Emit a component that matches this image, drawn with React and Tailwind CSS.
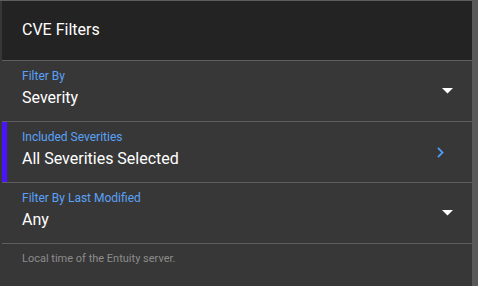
function DropArrow() {
  return (
    <svg width="11" height="6" viewBox="0 0 11 6" className="shrink-0">
      <path d="M0 0h11L5.5 5.5z" fill="#ffffff" />
    </svg>
  );
}

function Chevron() {
  return (
    <svg width="8" height="11" viewBox="0 0 8 11" className="mr-[12px] shrink-0">
      <path d="M1.6 0.3L0.3 1.6 4.2 5.5 0.3 9.4 1.6 10.7 6.8 5.5z" fill="#4e9bf5" />
    </svg>
  );
}

function Field({ label, value, accent, icon }) {
  return (
    <div className="relative flex h-[61px] items-start border-b border-[#5e5e5e] bg-[#373737] pl-[20px]">
      {accent && <span className="absolute left-0 top-0 h-full w-[5px] bg-[#4b14ff]" />}
      <div className="flex flex-1 flex-col pt-[7px]">
        <span className="text-[12px] leading-[16px] text-[#5aa2f7]">{label}</span>
        <span className="mt-[2px] text-[16px] leading-[24px] text-white">{value}</span>
      </div>
      <div className="flex h-full w-[50px] items-center justify-center">{icon}</div>
    </div>
  );
}

export default function App() {
  return (
    <div
      className="flex h-[286px] w-[478px] bg-[#373737]"
      style={{ fontFamily: 'Roboto, "Liberation Sans", sans-serif' }}
    >
      <div className="flex w-[472px] flex-col border-t border-[#5e5e5e] pl-[2px]">
        <div className="flex h-[60px] items-center border-b border-[#5e5e5e] bg-[#232323] pl-[20px] pb-[1px]">
          <span className="text-[16px] leading-[24px] text-white">CVE Filters</span>
        </div>
        <Field label="Filter By" value="Severity" icon={<DropArrow />} />
        <Field label="Included Severities" value="All Severities Selected" accent icon={<Chevron />} />
        <Field label="Filter By Last Modified" value="Any" icon={<DropArrow />} />
        <div className="pl-[20px] pt-[7px] text-[11px] leading-[16px] text-[#8c8c8c]">
          Local time of the Entuity server.
        </div>
      </div>
      <div className="h-full w-[6px] bg-[#595959]" />
    </div>
  );
}
